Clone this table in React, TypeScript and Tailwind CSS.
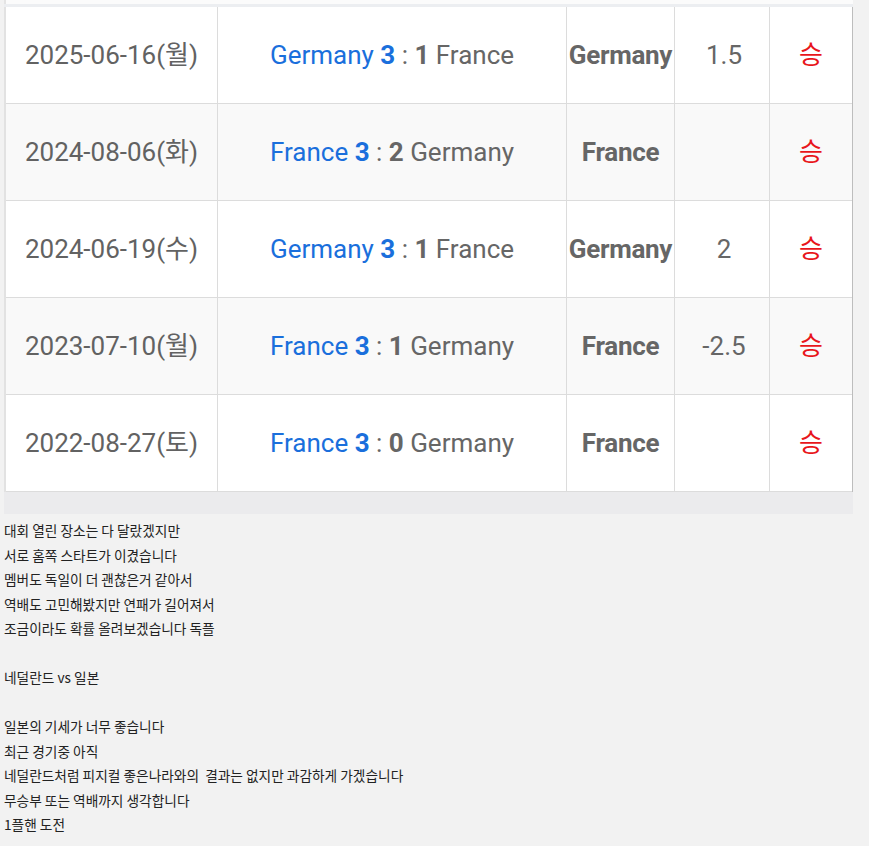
import React from 'react'

type Match = {
  date: string
  home: string
  homeScore: number
  awayScore: number
  away: string
  winner: string
  handicap: string
}

const matches: Match[] = [
  { date: '2025-06-16(월)', home: 'Germany', homeScore: 3, awayScore: 1, away: 'France', winner: 'Germany', handicap: '1.5' },
  { date: '2024-08-06(화)', home: 'France', homeScore: 3, awayScore: 2, away: 'Germany', winner: 'France', handicap: '' },
  { date: '2024-06-19(수)', home: 'Germany', homeScore: 3, awayScore: 1, away: 'France', winner: 'Germany', handicap: '2' },
  { date: '2023-07-10(월)', home: 'France', homeScore: 3, awayScore: 1, away: 'Germany', winner: 'France', handicap: '-2.5' },
  { date: '2022-08-27(토)', home: 'France', homeScore: 3, awayScore: 0, away: 'Germany', winner: 'France', handicap: '' }
]

const lines = [
  '대회 열린 장소는 다 달랐겠지만',
  '서로 홈쪽 스타트가 이겼습니다',
  '멤버도 독일이 더 괜찮은거 같아서',
  '역배도 고민해봤지만 연패가 길어져서',
  '조금이라도 확률 올려보겠습니다 독플',
  '',
  '네덜란드 vs 일본',
  '',
  '일본의 기세가 너무 좋습니다',
  '최근 경기중 아직',
  '네덜란드처럼 피지컬 좋은나라와의  결과는 없지만 과감하게 가겠습니다',
  '무승부 또는 역배까지 생각합니다',
  '1플핸 도전'
]

const MatchRow: React.FC<{ match: Match; striped: boolean }> = ({ match, striped }) => (
  <div
    className={`flex h-[97px] border-b border-[#dcdcdc] ${striped ? 'bg-[#f9f9f9]' : 'bg-white'}`}
  >
    <div className="w-[212px] flex items-center justify-center border-r border-[#dcdcdc] text-[26px] text-[#626262]">
      {match.date}
    </div>
    <div className="w-[349px] flex items-center justify-center border-r border-[#dcdcdc] text-[26px] whitespace-pre">
      <span className="text-[#1a6fdc]">{match.home} </span>
      <span className="text-[#1a6fdc] font-bold">{match.homeScore}</span>
      <span className="text-[#666]"> : </span>
      <span className="text-[#666] font-bold">{match.awayScore}</span>
      <span className="text-[#666]"> {match.away}</span>
    </div>
    <div className="w-[108px] flex items-center justify-center border-r border-[#dcdcdc] text-[26px] font-bold text-[#666] tracking-[-0.3px] whitespace-nowrap">
      {match.winner}
    </div>
    <div className="w-[95px] flex items-center justify-center pl-1 border-r border-[#dcdcdc] text-[26px] text-[#666]">
      {match.handicap}
    </div>
    <div className="w-[82px] flex items-center justify-center text-[26px] text-[#e8161b]">
      승
    </div>
  </div>
)

export default function App() {
  return (
    <div
      className="min-h-[846px] bg-[#f2f2f2] pb-2"
      style={{ fontFamily: 'Roboto, "Noto Sans CJK KR", sans-serif' }}
    >
      <div className="ml-[4px] w-[849px]">
        <div className="h-[4px] bg-[#fbfbfb] border-l-2 border-[#e4e4e4]" />
        <div className="h-[3px] bg-[#eceef1]" />
        <div className="border-l-2 border-[#e2e2e2] border-r border-r-[#bdbdbd]">
          {matches.map((m, i) => (
            <MatchRow key={m.date} match={m} striped={i % 2 === 1} />
          ))}
        </div>
        <div className="h-[22px] bg-[#ebebed]" />
      </div>
      <div
        className="pt-[4px] pl-[4px] text-[13.7px] leading-[24.5px] text-[#222]"
        style={{ fontFamily: '"Noto Sans CJK KR", sans-serif' }}
      >
        {lines.map((line, i) => (
          <div key={i} className="h-[24.5px] whitespace-pre">
            {line}
          </div>
        ))}
      </div>
    </div>
  )
}
